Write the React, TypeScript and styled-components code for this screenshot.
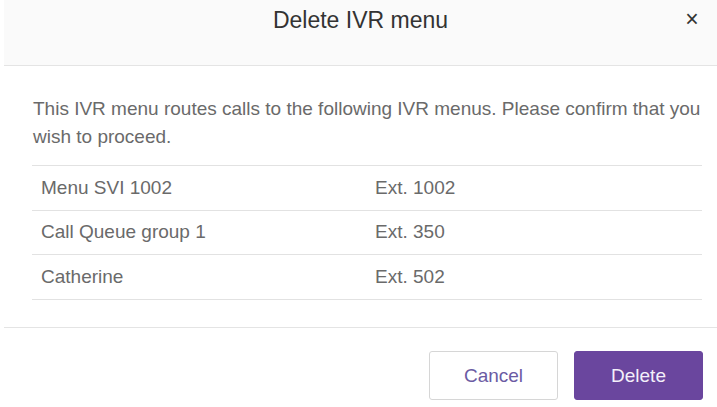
import React from "react";
import styled, { createGlobalStyle } from "styled-components";

const Global = createGlobalStyle`
  html, body { margin: 0; padding: 0; background: #ffffff; }
  body { font-family: "Liberation Sans", Arial, sans-serif; }
`;

const Modal = styled.div`
  width: 713px;
  height: 407px;
  margin-left: 4px;
  background: #ffffff;
  display: flex;
  flex-direction: column;
`;

const Header = styled.header`
  height: 66px;
  flex: none;
  box-sizing: border-box;
  background: #fafafa;
  border-bottom: 1px solid #e4e4e4;
  display: flex;
  align-items: flex-start;
  justify-content: center;
  position: relative;
`;

const Title = styled.h1`
  margin: 7px 0 0;
  font-size: 23px;
  font-weight: 400;
  line-height: 26px;
  color: #333333;
`;

const Close = styled.button`
  position: absolute;
  right: 18px;
  top: 6px;
  border: none;
  background: transparent;
  padding: 0;
  width: 14px;
  height: 26px;
  font-family: "Liberation Sans", Arial, sans-serif;
  font-size: 23px;
  line-height: 26px;
  color: #333333;
  cursor: pointer;
`;

const Body = styled.div`
  flex: none;
  padding: 29px 15px 0 28px;
  height: 262px;
  box-sizing: border-box;
  border-bottom: 1px solid #e4e4e4;
`;

const Message = styled.p`
  margin: 0 -8px 0 1px;
  font-size: 19px;
  line-height: 28px;
  color: #6a6a6a;
`;

const Table = styled.div`
  margin-top: 14px;
  border-top: 1px solid #e2e2e2;
`;

const Row = styled.div`
  display: grid;
  grid-template-columns: 334px 1fr;
  height: 44.5px;
  box-sizing: border-box;
  border-bottom: 1px solid #e2e2e2;
  align-items: center;
  padding-left: 9px;
  font-size: 19px;
  color: #6a6a6a;
`;

const Cell = styled.span`
  line-height: 22px;
`;

const Footer = styled.footer`
  display: flex;
  justify-content: flex-end;
  gap: 16px;
  padding: 23px 14px 0 0;
`;

const Button = styled.button<{ $primary?: boolean }>`
  width: 129px;
  height: 49px;
  box-sizing: border-box;
  border-radius: 3px;
  font-family: "Liberation Sans", Arial, sans-serif;
  font-size: 19px;
  cursor: pointer;
  border: 1px solid ${(p) => (p.$primary ? "#6a469e" : "#d6d6d6")};
  background: ${(p) => (p.$primary ? "#6a469e" : "#ffffff")};
  color: ${(p) => (p.$primary ? "#f4f0fa" : "#6b5ba3")};
`;

const rows = [
  ["Menu SVI 1002", "Ext. 1002"],
  ["Call Queue group 1", "Ext. 350"],
  ["Catherine", "Ext. 502"],
];

export default function App() {
  return (
    <>
      <Global />
      <Modal>
        <Header>
          <Title>Delete IVR menu</Title>
          <Close aria-label="Close">×</Close>
        </Header>
        <Body>
          <Message>
            This IVR menu routes calls to the following IVR menus. Please confirm that you wish to proceed.
          </Message>
          <Table>
            {rows.map(([name, ext]) => (
              <Row key={name}>
                <Cell>{name}</Cell>
                <Cell>{ext}</Cell>
              </Row>
            ))}
          </Table>
        </Body>
        <Footer>
          <Button>Cancel</Button>
          <Button $primary>Delete</Button>
        </Footer>
      </Modal>
    </>
  );
}
